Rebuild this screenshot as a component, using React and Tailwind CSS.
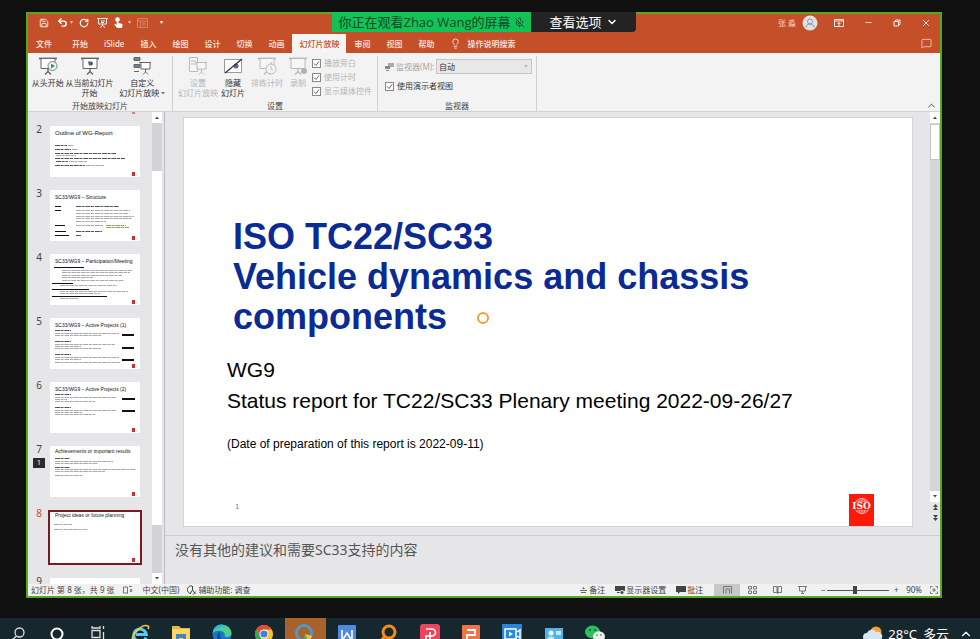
import { useState } from 'react';
import { ChevronDown, ChevronUp, Lightbulb, MessageSquare, Minus, Save, Undo2, RotateCw, X, Copy, MicOff } from 'lucide-react';

const tabs = ['开始', 'iSlide', '插入', '绘图', '设计', '切换', '动画', '幻灯片放映', '审阅', '视图', '帮助'];

// line: [x, y, width, kind] on a 90 x 51 page, kind: g = grey, d = dark, b = black block, o = olive
const slides = [
    {
        id: 2, title: 'Outline of WG-Report', titleClass: 'pt-[4px] text-[6px]',
        lines: [[5, 19, 12, 'd'], [18, 19, 6, 'g'], [5, 23, 16, 'd'], [22, 23, 6, 'g'], [5, 27, 61, 'd'], [6, 29, 20, 'g'], [5, 32, 70, 'd'], [6, 35, 12, 'd'], [19, 35, 18, 'g'], [5, 39, 30, 'd'], [36, 39, 18, 'g']],
    },
    {
        id: 3, title: 'SC33/WG9 – Structure', titleClass: 'pt-[4px] text-[5px]',
        lines: [[5, 16, 6, 'b'], [26, 16, 43, 'd'], [5, 20, 6, 'b'], [26, 20, 54, 'g'], [26, 23, 52, 'g'], [26, 26, 58, 'g'], [26, 28, 56, 'g'], [26, 31, 30, 'g'], [5, 35, 10, 'b'], [26, 35, 27, 'g'], [56, 35, 20, 'o'], [56, 37, 23, 'o'], [5, 41, 11, 'b'], [26, 41, 26, 'd'], [5, 45, 14, 'b'], [26, 45, 5, 'd']],
    },
    {
        id: 4, title: 'SC33/WG9 – Participation/Meeting', titleClass: 'pt-[4px] text-[5px]',
        lines: [[4, 13, 30, 'b'], [12, 16, 70, 'g'], [12, 18, 68, 'g'], [12, 21, 60, 'g'], [12, 23, 31, 'g'], [12, 26, 62, 'g'], [2, 29, 21, 'b'], [10, 31, 57, 'g'], [2, 35, 37, 'b'], [10, 37, 68, 'g'], [10, 39, 40, 'g'], [2, 42, 55, 'b'], [10, 44, 18, 'g']],
    },
    {
        id: 5, title: 'SC33/WG9 – Active Projects (1)', titleClass: 'pt-[4px] text-[5px]',
        lines: [[5, 12, 16, 'd'], [5, 15, 64, 'g'], [5, 17, 47, 'g'], [72, 16, 12, 'b'], [72, 17, 12, 'b'], [5, 23, 16, 'd'], [5, 26, 60, 'g'], [5, 28, 26, 'g'], [5, 30, 46, 'g'], [72, 29, 12, 'b'], [72, 30, 12, 'b'], [5, 36, 16, 'd'], [5, 39, 64, 'g'], [5, 41, 26, 'g'], [5, 44, 65, 'g'], [72, 41, 12, 'b'], [72, 42, 12, 'b']],
    },
    {
        id: 6, title: 'SC33/WG9 – Active Projects (2)', titleClass: 'pt-[4px] text-[5px]',
        lines: [[5, 12, 16, 'd'], [5, 15, 61, 'g'], [5, 17, 12, 'g'], [5, 19, 40, 'g'], [72, 16, 13, 'b'], [72, 17, 13, 'b'], [5, 25, 16, 'd'], [5, 28, 61, 'g'], [5, 30, 28, 'g'], [5, 32, 40, 'g'], [72, 28, 13, 'b'], [72, 29, 13, 'b']],
    },
    {
        id: 7, title: 'Achievements or important results', titleClass: 'pt-[2px] text-[5px]', comments: 1,
        lines: [[5, 12, 15, 'd'], [5, 15, 58, 'g'], [5, 17, 43, 'g'], [5, 21, 15, 'd'], [5, 23, 81, 'g'], [5, 25, 50, 'g'], [5, 29, 28, 'g']],
    },
    { id: 8, title: 'Project ideas or future planning', titleClass: 'text-[5px]', active: true, lines: [[4, 12, 18, 'g'], [4, 17, 34, 'g']] },
    { id: 9, title: '', titleClass: '', lines: [] },
];

const lineColors = { g: '#aaa', d: '#555', b: '#111', o: '#a09a70' };

function Thumb({ slide }) {
    return (
        <li className="flex shrink-0 items-start">
            <div className="flex w-5 flex-col items-center pl-[2px]">
                <span className={`text-[10px] leading-[6px] ${slide.active ? 'text-[#d6492c]' : 'text-[#444]'}`}>{slide.id}</span>
                {slide.comments && (
                    <span className="mt-[6px] h-[10px] w-3 bg-[#2b2b2b] text-center text-[7px] leading-[10px] text-white">{slide.comments}</span>
                )}
            </div>
            <div className={slide.active ? 'border-2 border-[#7b1a22]' : 'mx-[2px]'}>
                <div className="grid h-[51px] w-[90px] bg-white">
                    <p className={`whitespace-nowrap pl-[5px] font-['Liberation_Sans',Arial,sans-serif] leading-[7px] text-[#111] [grid-area:1/1] ${slide.titleClass}`}>{slide.title}</p>
                    <svg viewBox="0 0 90 51" className="h-[51px] w-[90px] [grid-area:1/1]">
                        {slide.lines.map(([x, y, w, kind]) => (
                            <line key={`${x}-${y}`} x1={x} x2={x + w} y1={y + 0.5} y2={y + 0.5} stroke={lineColors[kind]} strokeDasharray={kind === 'b' ? undefined : '5 0.6 3 0.8'} />
                        ))}
                        {slide.title && <rect x="82" y="46" width="3" height="4" fill="#d92b2b" />}
                    </svg>
                </div>
            </div>
        </li>
    );
}

function ScreenIcon({ children }) {
    return (
        <svg viewBox="0 0 20 20" className="h-5 w-5" fill="none" stroke="#666">
            <path d="M1 2.5h18" strokeWidth="1.8" />
            <path d="M3 3v9.5h14V3" fill="#fff" />
            <path d="M10 12.5v4M7 18.5l3-3 3 3" strokeWidth="1.4" />
            {children}
        </svg>
    );
}

function RibbonButton({ icon, lines, faded, caret, width }) {
    return (
        <button className={`flex flex-col items-center text-[8px] leading-[10px] whitespace-nowrap ${width} ${faded ? 'text-[#b5b5b5]' : 'text-[#333]'}`}>
            <span className={`mb-[2px] h-5 ${faded ? 'opacity-40' : ''}`}>{icon}</span>
            {lines.map((line, i) => (
                <span key={line} className="flex items-center">
                    {line}
                    {caret && i === lines.length - 1 && <Caret />}
                </span>
            ))}
        </button>
    );
}

function Caret() {
    return <svg viewBox="0 0 4 3" className="ml-[2px] h-[3px] w-1 shrink-0"><path d="M0 0h4L2 2.5z" fill="#777" /></svg>;
}

function CheckItem({ label, faded }) {
    const [checked, setChecked] = useState(true);
    return (
        <label className={`flex items-center gap-[3px] text-[8px] leading-[14px] whitespace-nowrap ${faded ? 'text-[#b5b5b5]' : 'text-[#333]'}`}>
            <span className="grid h-[9px] w-[9px]">
                <input
                    type="checkbox"
                    checked={checked}
                    disabled={faded}
                    onChange={(e) => setChecked(e.target.checked)}
                    className="h-[9px] w-[9px] appearance-none border border-[#888] bg-white [grid-area:1/1]"
                />
                {checked && (
                    <svg viewBox="0 0 9 9" className="pointer-events-none h-[9px] w-[9px] [grid-area:1/1]" fill="none" stroke="#666">
                        <path d="M2 4.5l2 2 3-4" />
                    </svg>
                )}
            </span>
            {label}
        </label>
    );
}

function TitleBar() {
    return (
        <div className="flex h-5 shrink-0 items-center pr-[9px] pb-[3px] pl-[11px] text-white">
            <div className="flex items-center">
                <button title="保存"><Save size={10} /></button>
                <button title="撤消" className="ml-2 flex items-center"><Undo2 size={11} strokeWidth={3} /></button>
                <span className="ml-[2px] text-[6px] opacity-60">▾</span>
                <button title="恢复" className="ml-[6px]"><RotateCw size={10} strokeWidth={3} /></button>
                <button title="从头开始" className="ml-2">
                    <svg viewBox="0 0 11 11" className="h-[11px] w-[11px]" fill="none" stroke="#fff"><path d="M0 1.5h11M1.500 2v5h8V2M5.500 7v2M3 10.500l2.500-2 2.500 2M4 4h4M4 5.500h3" strokeWidth=".9" /></svg>
                </button>
                <button title="触摸" className="ml-[6px]">
                    <svg viewBox="0 0 9 11" className="h-[11px] w-[9px]" fill="#fff"><circle cx="3.5" cy="2.5" r="2.3" /><path d="M2.7 2h1.600v4l3.500.7c.8.200.9.900.7 1.600L8 11H3L.3 7.500l1-.7 1.400 1z" /></svg>
                </button>
                <span className="ml-[5px] text-[6px] opacity-60">▾</span>
                <button title="表格" className="ml-[6px] opacity-30">
                    <svg viewBox="0 0 11 10" className="h-[10px] w-[11px]" fill="none" stroke="#fff"><path d="M.5.5h10v9H.5zM.5 3h10M3.500 3v6M5 5h4M5 7h4" /></svg>
                </button>
                <span className="ml-3 text-[6px]">▾</span>
            </div>
            <div className="ml-auto flex items-center">
                <span className="text-[8px] text-[#f7d5c8]">张 淼</span>
                <svg viewBox="0 0 16 16" className="ml-[6px] h-4 w-4">
                    <circle cx="8" cy="8" r="7.5" fill="#e3e1df" />
                    <circle cx="8" cy="6.5" r="2.5" fill="none" stroke="#8296b3" />
                    <path d="M3.8 12.5c.5-4.500 7.900-4.500 8.400 0" fill="none" stroke="#8296b3" />
                </svg>
                <button title="功能区显示选项" className="ml-4">
                    <svg viewBox="0 0 10 8" className="h-2 w-[10px]" fill="none" stroke="#fff" strokeWidth=".9"><path d="M.5.5h9v7h-9zM.5 2h9M5 7V3.500M3.500 5L5 3.500 6.500 5" /></svg>
                </button>
                <button title="最小化" className="ml-5"><Minus size={9} /></button>
                <button title="还原" className="ml-5">
                    <svg viewBox="0 0 8 8" className="h-2 w-2" fill="none" stroke="#fff" strokeWidth=".9"><path d="M1 2.500h4.500V7H1zM2.500 2.500V1H7v4.500H5.500" /></svg>
                </button>
                <button title="关闭" className="ml-5"><X size={10} /></button>
            </div>
        </div>
    );
}

function TabBar() {
    return (
        <nav className="flex h-[19px] shrink-0 items-stretch text-[8px] leading-[19px] font-medium text-[#fbe9e2]">
            <button className="mr-1 px-2">文件</button>
            {tabs.map((tab) => (
                <button key={tab} className={tab === '幻灯片放映' ? 'bg-[#f5f4f3] px-[7px] text-[#c44f28]' : 'px-2'}>{tab}</button>
            ))}
            <button className="ml-2 flex items-center gap-[6px]">
                <Lightbulb size={11} />
                操作说明搜索
            </button>
            <button title="批注" className="ml-auto pr-2"><MessageSquare size={11} strokeWidth={1.5} /></button>
        </nav>
    );
}

function Group({ label, children, width }) {
    return (
        <section className={`flex flex-col border-r border-[#d0d0d0] ${width}`}>
            <div className="flex flex-1">{children}</div>
            <h2 className="text-center text-[8px] leading-[10px] text-[#444]">{label}</h2>
        </section>
    );
}

function Ribbon() {
    return (
        <div className="flex h-[59px] shrink-0 border-b border-[#d2d2d2] bg-[#f3f3f3] pt-[3px]">
            <Group label="开始放映幻灯片" width="w-[145px]">
                <RibbonButton width="w-[38px] ml-[1px]" lines={['从头开始']} icon={<ScreenIcon><circle cx="14.5" cy="10" r="4.5" fill="#f3f3f3" stroke="#6d8d86" /><path d="M13 7.500l4 2.500-4 2.500z" fill="#3f8f6f" stroke="none" /></ScreenIcon>} />
                <RibbonButton width="w-[46px]" lines={['从当前幻灯片', '开始']} icon={<ScreenIcon><path d="M8 5.500h3a2 2 0 010 4H9z" fill="#4a5a88" stroke="none" /></ScreenIcon>} />
                <RibbonButton
                    width="w-[60px]"
                    caret
                    lines={['自定义', '幻灯片放映']}
                    icon={
                        <svg viewBox="0 0 20 20" className="h-5 w-5" fill="#fff" stroke="#666">
                            <path d="M2 1.500h6v3H2zM2 8.500h6v3H2zM2 15.500h5" fill="#6585a8" />
                            <path d="M7 6.500h12M9 7v6h9V7M13.500 13v3M11 18.500l2.500-2.500 2.500 2.500" />
                        </svg>
                    }
                />
            </Group>
            <Group label="设置" width="w-[205px]">
                <RibbonButton
                    width="w-[44px] ml-[3px]"
                    faded
                    lines={['设置', '幻灯片放映']}
                    icon={
                        <svg viewBox="0 0 20 20" className="h-5 w-5" fill="#fff" stroke="#666">
                            <path d="M1.500 1.500h8v14h-8zM3 5h5M3 8h5" />
                            <path d="M7 6.500h12M9 7v6h9V7M13.500 13v3M11 18.500l2.500-2.500 2.500 2.500" />
                        </svg>
                    }
                />
                <RibbonButton
                    width="w-[26px]"
                    lines={['隐藏', '幻灯片']}
                    icon={
                        <svg viewBox="0 0 20 20" className="h-5 w-5" fill="#fff" stroke="#999">
                            <path d="M1.500 3.500h17v13h-17z" />
                            <circle cx="13" cy="10" r="2.500" fill="#5a6690" stroke="none" />
                            <path d="M2 17L19 3" stroke="#333" strokeWidth="1.3" />
                        </svg>
                    }
                />
                <RibbonButton
                    width="w-[42px]"
                    faded
                    lines={['排练计时']}
                    icon={<ScreenIcon><circle cx="14" cy="13" r="5" fill="#f3f3f3" /><path d="M14 10v3l2 1M14 6v2" /></ScreenIcon>}
                />
                <RibbonButton
                    width="w-[20px]"
                    faded
                    lines={['录制']}
                    icon={<ScreenIcon><circle cx="16" cy="15" r="3" fill="#555" stroke="none" /></ScreenIcon>}
                />
                <div className="ml-1 flex flex-col">
                    <CheckItem faded label="播放旁白" />
                    <CheckItem faded label="使用计时" />
                    <CheckItem faded label="显示媒体控件" />
                </div>
            </Group>
            <Group label="监视器" width="w-[159px]">
                <div className="flex flex-1 flex-col gap-[5px] pt-[3px] pr-1 pl-[7px]">
                    <div className="flex items-center">
                        <svg viewBox="0 0 9 8" className="h-2 w-[9px]"><path d="M3 0h6v4H3z" fill="#aaa" /><path d="M0 3h5v3H0zM1 7h3v1H1z" fill="#888" /></svg>
                        <label htmlFor="monitor" className="ml-[2px] w-10 text-[8px] whitespace-nowrap text-[#a5a5a5]">监视器(M):</label>
                        <div className="grid flex-1 items-center">
                            <select id="monitor" className="h-[15px] appearance-none border border-[#c6c6c6] bg-[#e8e8e8] pl-[2px] text-[8px] leading-[13px] text-[#333] [grid-area:1/1]">
                                <option>自动</option>
                            </select>
                            <span className="pointer-events-none justify-self-end pr-1 opacity-50 [grid-area:1/1]"><Caret /></span>
                        </div>
                    </div>
                    <CheckItem label="使用演示者视图" />
                </div>
            </Group>
            <button title="折叠功能区" className="ml-auto self-end pr-[3px]"><ChevronUp size={11} color="#444" /></button>
        </div>
    );
}

function ArrowButton({ down, title }) {
    return (
        <button title={title} className="flex h-[11px] shrink-0 items-center justify-center bg-white">
            <svg viewBox="0 0 4 3" className="h-[3px] w-1"><path d={down ? 'M0 0h4L2 2.5z' : 'M0 3h4L2 .5z'} fill="#444" /></svg>
        </button>
    );
}

function SlideList() {
    return (
        <aside className="flex w-[137px] shrink-0 border-r border-[#bcbcbe]">
            <div className="flex-1 overflow-hidden">
                <div className="flex h-[14px] justify-end pr-[17px]"><span className="h-[2px] w-[3px] bg-[#d98080]" /></div>
                <ul className="flex h-0 flex-col gap-[13px]">
                    {slides.map((slide) => <Thumb key={slide.id} slide={slide} />)}
                </ul>
            </div>
            <div className="mr-[2px] flex w-[10px] flex-col bg-[#d3d3d5]">
                <ArrowButton title="向上" />
                <div className="my-12 flex-1 bg-white" />
                <ArrowButton down title="向下" />
            </div>
        </aside>
    );
}

function IsoLogo() {
    return (
        <div className="grid h-8 w-[25px] justify-items-center bg-[#fb1a0a]">
            <svg viewBox="0 0 20 20" className="mt-[3px] h-[18px] w-[18px] [grid-area:1/1]" fill="none" stroke="#ffb9b0" strokeWidth=".9">
                <circle cx="10" cy="10" r="8.5" />
                <ellipse cx="10" cy="10" rx="4" ry="8.5" />
                <path d="M10 1.500v17M3.500 4.500h13M3.500 15.500h13" />
                <rect x="0" y="6" width="20" height="8" fill="#fb1a0a" stroke="none" />
            </svg>
            <span className="mt-[6px] font-['DejaVu_Serif',serif] text-[9px] leading-[13px] font-bold text-white [grid-area:1/1]">ISO</span>
        </div>
    );
}

function Slide() {
    return (
        <article className="relative flex flex-1 flex-col border border-[#d4d4d6] bg-white pl-[43px] font-['Liberation_Sans',Arial,sans-serif] text-black">
            <h1 className="mt-[99px] ml-[6px] text-[36px] leading-10 font-bold text-[#0a2a94]">
                ISO TC22/SC33<br />Vehicle dynamics and chassis<br />components
            </h1>
            <p className="mt-[17px] text-[21px] leading-[31px]">WG9<br />Status report for TC22/SC33 Plenary meeting 2022-09-26/27</p>
            <p className="mt-5 text-[12px] leading-4">(Date of preparation of this report is 2022-09-11)</p>
            <div className="mt-auto flex items-start justify-between pr-[38px]">
                <span className="ml-2 pt-2 text-[8px] leading-[10px] text-[#888]">1</span>
                <IsoLogo />
            </div>
            {/* laser pointer */}
            <span className="absolute top-[194px] left-[293px] h-3 w-3 rounded-full border-2 border-[#eda23c]" />
        </article>
    );
}

function Editor() {
    return (
        <main className="flex min-w-0 flex-1 flex-col bg-[#e6e6e8]">
            <div className="flex flex-1">
                <div className="flex flex-1 pt-[5px] pr-[17px] pb-2 pl-[18px]"><Slide /></div>
                <div className="flex w-[10px] flex-col bg-[#d6d6d9]">
                    <ArrowButton title="上一页" />
                    <div className="mt-px h-9 border border-[#c5c5c8] bg-white" />
                    <div className="flex-1" />
                    <ArrowButton down title="下一页" />
                    <div className="flex h-[33px] flex-col items-center gap-[5px] bg-[#e6e6e8] pt-[2px]">
                        <svg viewBox="0 0 5 6" className="h-[6px] w-[5px]" fill="#444"><path d="M0 3L2.500 0 5 3zM0 6l2.500-3L5 6z" /></svg>
                        <svg viewBox="0 0 5 6" className="h-[6px] w-[5px]" fill="#444"><path d="M0 0h5L2.500 3zM0 3h5L2.500 6z" /></svg>
                    </div>
                </div>
            </div>
            <p className="h-[49px] border-t border-[#cfcfd1] pt-[3px] pl-[10px] text-[14px] leading-[22px] text-[#555]">没有其他的建议和需要SC33支持的内容</p>
        </main>
    );
}

function StatusBar() {
    const [zoom, setZoom] = useState(45);
    return (
        <footer className="flex h-3 shrink-0 items-center bg-[#f1f1f1] pl-[3px] text-[8px] leading-3 whitespace-nowrap text-[#444]">
            <span>幻灯片 第 8 张，共 9 张</span>
            <svg viewBox="0 0 10 8" className="ml-2 h-2 w-[10px]" fill="none" stroke="#777"><path d="M4.500 1v6.500M4.500 1h-4v6h4M6 .5h3M7 3l2 3M9 3L7 6" /></svg>
            <span className="ml-[10px]">中文(中国)</span>
            <svg viewBox="0 0 10 10" className="mr-[1px] ml-2 h-[10px] w-[10px]" fill="none" stroke="#444"><path d="M5 1a3.800 3.800 0 10-1 7.500M5.500 1v4l3 4M5.500 5L3 9M6 9.500l3-3" /></svg>
            <span>辅助功能: 调查</span>
            <div className="ml-auto flex items-center">
                <button className="flex items-center gap-[2px]">
                    <svg viewBox="0 0 7 6" className="h-[6px] w-[7px]"><path d="M0 3.500h7M1 5.500h5" stroke="#666" /><path d="M2 2l1.500-2L5 2z" fill="#666" /></svg>
                    备注
                </button>
                <button className="ml-[10px] flex items-center gap-[1px]">
                    <svg viewBox="0 0 10 9" className="h-[9px] w-[10px]" fill="#444"><path d="M0 0h10v5H0zM2 6h3v1H2z" /><circle cx="7" cy="6.5" r="2" stroke="#eee" /></svg>
                    显示器设置
                </button>
                <button className="ml-[10px] flex items-center gap-[1px]">
                    <svg viewBox="0 0 10 8" className="h-2 w-[10px]" fill="#444"><path d="M0 0h10v6H4L2 8V6H0z" /></svg>
                    批注
                </button>
                <button title="普通视图" className="ml-[11px] flex h-3 w-[26px] items-center justify-center bg-[#c8c8c8]">
                    <svg viewBox="0 0 9 8" className="h-2 w-[9px]" fill="none" stroke="#777"><path d="M.5.5h8v7M.5.5v7M3 3v4.500M3 3h3.500v4.500" /></svg>
                </button>
                <button title="幻灯片浏览" className="ml-2">
                    <svg viewBox="0 0 9 8" className="h-2 w-[9px]" fill="none" stroke="#777"><path d="M.5.5h3v2.500h-3zM5.500.5h3v2.500h-3zM.5 5h3v2.500h-3zM5.500 5h3v2.500h-3z" /></svg>
                </button>
                <button title="阅读视图" className="ml-4">
                    <svg viewBox="0 0 9 8" className="h-2 w-[9px]" fill="none" stroke="#777"><path d="M.5.5h3.500v6H.5zM5 .5h3.500v6H5zM4.500 1v7" /></svg>
                </button>
                <button title="幻灯片放映" className="ml-4">
                    <svg viewBox="0 0 9 8" className="h-2 w-[9px]" fill="none" stroke="#777"><path d="M0 .5h9M1.500 1v4h6V1M4.500 5v2M3 7.500h3" /></svg>
                </button>
                <button className="ml-[12px] w-2">−</button>
                <input
                    type="range"
                    aria-label="缩放"
                    value={zoom}
                    onChange={(e) => setZoom(Number(e.target.value))}
                    className="h-2 w-[62px] appearance-none bg-[linear-gradient(#555,#555)] bg-[length:100%_1px] bg-center bg-no-repeat [&::-webkit-slider-thumb]:h-2 [&::-webkit-slider-thumb]:w-1 [&::-webkit-slider-thumb]:appearance-none [&::-webkit-slider-thumb]:bg-[#444]"
                />
                <button className="ml-[3px] w-2">+</button>
                <span className="ml-[6px]">90%</span>
                <button title="适应窗口" className="ml-2 pr-[2px]">
                    <svg viewBox="0 0 8 8" className="h-2 w-2" fill="none" stroke="#777"><path d="M.5 2.500v-2h2M5.500.5h2v2M7.500 5.500v2h-2M2.500 7.500h-2v-2M4 2v4M2 4h4" /></svg>
                </button>
            </div>
        </footer>
    );
}

const apps = [
    { name: 'Cortana', icon: <circle cx="10" cy="10" r="5.5" fill="none" stroke="#fff" strokeWidth="2" /> },
    { name: '任务视图', icon: <path d="M4 2v2h8V2M4 18v-2h8v2M4 6.500h8v7H4zM15.500 2v3M15.500 8v10" fill="none" stroke="#ddd" strokeWidth="1.3" /> },
    { name: 'Internet Explorer', icon: <><path d="M16 13.500A6.300 6.300 0 1 1 16.300 10.500H6" fill="none" stroke="#5cc8f2" strokeWidth="3" /><path d="M3 17C-1 13 12-1 18 2c1 .8.700 2 0 3" fill="none" stroke="#f2c744" strokeWidth="1.6" /></> },
    { name: '文件资源管理器', icon: <><path d="M1 2h7l2 2h9v15H1z" fill="#e8b445" /><path d="M1 5h18v14H1z" fill="#fbd56b" /><path d="M5 10h10v9h-3v-5H8v5H5z" fill="#3f87c4" /></> },
    { name: 'Edge', icon: <><circle cx="10" cy="10" r="9.5" fill="#1976c9" /><path d="M.7 9C2-2 18-2 19.500 9c0 4-5 5-7 3 2-4-6-8-11.800-3z" fill="#4fce8c" /><path d="M.7 9C2-1 12-1 15 3c-5-1-11 1-14.300 6z" fill="#31b7dc" /><path d="M8 10c-1 4 3 7 8 5-3 5-11 3-11-3 0-2 1-3 3-4z" fill="#114b8c" /></> },
    { name: 'Chrome', icon: <><circle cx="10" cy="10" r="9" fill="#f5c52c" /><path d="M2.200 5.500a9 9 0 0115.600 0H10L6 12z" fill="#e04a3a" /><path d="M2.200 5.500L7 14l3 5a9 9 0 01-7.800-13.500z" fill="#34a455" /><circle cx="10" cy="10" r="4.6" fill="#fff" /><circle cx="10" cy="10" r="3.6" fill="#3f7fe8" /></> },
    { name: '浏览器', active: true, icon: <><circle cx="9" cy="9" r="7.5" fill="none" stroke="#5596c2" strokeWidth="3" /><path d="M10 10l7 2-3 7z" fill="#e8c545" /><path d="M10 10l4 9-6-3z" fill="#5fab57" /></> },
    { name: 'WPS 文字', icon: <><rect x="1" y="1" width="18" height="20" rx="1" fill="#5089e0" /><path d="M5 6v8h2l3-5 3 5h2V6" fill="none" stroke="#fff" strokeWidth="1.6" /></> },
    { name: '搜索工具', icon: <><circle cx="11" cy="8" r="6" fill="none" stroke="#f58a1e" strokeWidth="3" /><path d="M7 12l-5 6" stroke="#f58a1e" strokeWidth="3" /></> },
    { name: 'PDF 阅读器', icon: <><rect width="20" height="21" rx="3" fill="#ef4460" /><path d="M6 5h6a3.500 3.500 0 010 7H6v5M10 8v7" fill="none" stroke="#fff" strokeWidth="1.6" /></> },
    { name: 'WPS 演示', icon: <><rect x="1" y="1" width="18" height="20" rx="1" fill="#f0744a" /><path d="M6 6h8v5H6v6" fill="none" stroke="#fff" strokeWidth="1.8" /></> },
    { name: '会议', icon: <><rect width="20" height="21" rx="1" fill="#2587d8" /><path d="M3 5h11v10H3zM15 8l3-2v8l-3-2" fill="none" stroke="#fff" strokeWidth="1.5" /><path d="M7 7.500l4 2.500-4 2.500z" fill="#fff" /></> },
    { name: '远程', icon: <><rect x="1" y="4" width="18" height="17" fill="#55b2e6" /><circle cx="7" cy="9" r="2.5" fill="#e9f6ff" /><path d="M3 16c1-5 7-5 8 0zM12 7h5v4h-5z" fill="#c5e7fa" /></> },
    { name: '微信', icon: <><ellipse cx="7.5" cy="8" rx="7.5" ry="6.5" fill="#2fbf62" /><circle cx="5" cy="6" r="1" fill="#115c2c" /><circle cx="10" cy="6" r="1" fill="#115c2c" /><ellipse cx="14" cy="12.5" rx="6" ry="5.3" fill="#eceeec" /><circle cx="12" cy="11" r=".8" fill="#555" /><circle cx="16" cy="11" r=".8" fill="#555" /></> },
];

function Taskbar() {
    return (
        <div className="h-[21px] shrink-0 overflow-hidden bg-[#17272e]">
            <div className="flex h-8 items-center">
                <button title="搜索" className="flex w-9 justify-center">
                    <svg viewBox="0 0 14 14" className="h-[14px] w-[14px]" fill="none" stroke="#ddd" strokeWidth="1.3"><circle cx="8.5" cy="5.5" r="4.5" /><path d="M5.500 9L1 13" /></svg>
                </button>
                <div className="grid h-full w-[580px] grid-cols-[repeat(14,minmax(0,1fr))]">
                    {apps.map((app) => (
                        <button key={app.name} title={app.name} className={`flex items-center justify-center ${app.active ? 'bg-[#a9622b]' : ''}`}>
                            <svg viewBox="0 0 20 20" className="h-5 w-5">{app.icon}</svg>
                        </button>
                    ))}
                </div>
                <div className="ml-auto flex items-center pr-[7px] text-white">
                    <svg viewBox="0 0 20 16" className="h-4 w-5"><circle cx="13" cy="6" r="5.5" fill="#f5a52b" /><path d="M4 15a4 4 0 010-8 5 5 0 019-1 4.500 4.500 0 013 9z" fill="#d9e5f3" /></svg>
                    <span className="ml-[5px] flex gap-[6px] text-[13px] leading-4"><span>28°C</span><span>多云</span></span>
                    <ChevronUp size={14} className="ml-[10px]" />
                </div>
            </div>
        </div>
    );
}

function ShareBanner() {
    return (
        <div className="absolute top-3 left-[332px] flex h-5 text-[13px] leading-5 whitespace-nowrap">
            <div className="flex w-[199px] items-center justify-center gap-[3px] bg-[#12c257] font-['Open_Sans','Noto_Sans_CJK_SC',sans-serif] text-[#0b4a24]">
                你正在观看Zhao Wang的屏幕
                <MicOff size={11} />
            </div>
            <button className="flex w-[105px] items-center justify-center gap-1 rounded-br bg-[#232323] text-white">
                查看选项
                <ChevronDown size={12} strokeWidth={3} />
            </button>
        </div>
    );
}

export default function App() {
    return (
        <div className="relative flex h-screen flex-col overflow-hidden bg-[#101010] font-['Noto_Sans','Noto_Sans_CJK_SC',sans-serif]">
            <div className="mt-3 mr-[38px] mb-5 ml-[26px] flex min-h-0 flex-1 flex-col border-2 border-[#55a823] bg-[#c44f28]">
                <TitleBar />
                <TabBar />
                <Ribbon />
                <div className="flex min-h-0 flex-1 bg-[#e6e6e8]">
                    <SlideList />
                    <Editor />
                </div>
                <StatusBar />
            </div>
            <ShareBanner />
            <Taskbar />
        </div>
    );
}
